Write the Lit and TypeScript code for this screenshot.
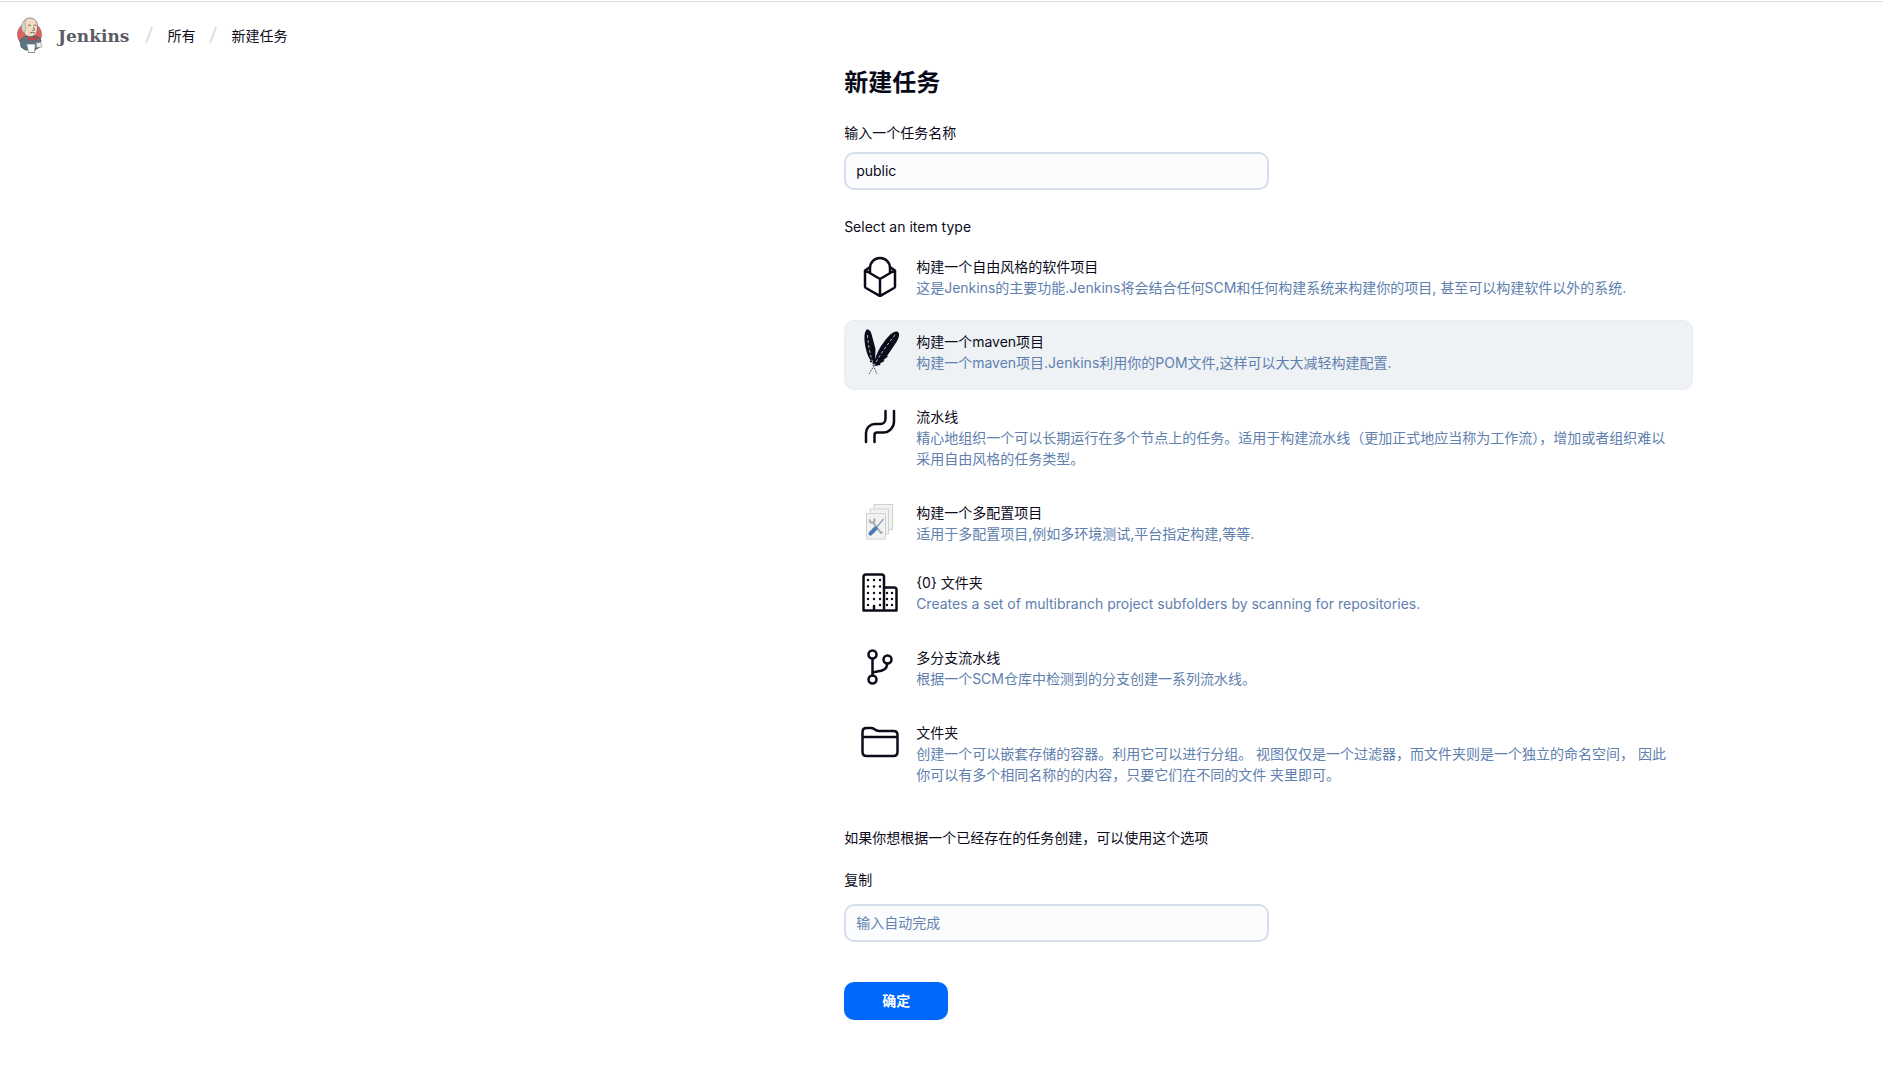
import { LitElement, html, css, svg } from "lit";
import { customElement, state } from "lit/decorators.js";
import { classMap } from "lit/directives/class-map.js";

type Item = { id: string; title: string; text: string; icon: unknown; compact?: boolean };

const dots = (xs: number[], ys: number[]) =>
  ys.map((y) => xs.map((x) => svg`<circle cx=${x} cy=${y} r="1.2"></circle>`));

const cube = svg`<g class="line">
  <path d="M9.5 14.5 5 17.5V33.5q0 1 .9 1.5L18.8 42.3q1.2.7 2.4 0L34.1 35q.9-.5.9-1.5V17.5L30.5 14.5M5.5 17.5 20 26 34.5 17.5M20 26V42"></path>
  <path d="M10 20V15a10 10 0 0 1 20 0V20"></path></g>`;

const feather = svg`
  <g class="solid">
    <path d="M5.5 3.5C6.5 0 10.5 1.5 11.5 6L15.5 21 15 36 13 37 12.5 34.5 9.5 34 10.5 32.5C7 27 5 19 4.5 12 4.3 8 4.5 5.5 5.5 3.5Z"></path>
    <path d="M38 4C40 5.5 39 10 36.5 14L27 28 28 28.5 23.5 32 24.5 33 20 35.5 20.5 37 15 38 14.5 33C16.5 26 19 20 24 14 28.5 7.5 34.5 2 38 4Z"></path>
  </g>
  <g class="rib">
    <path d="M7.5 7C8.5 18 10 28 14 38"></path><path d="M35 7C27 17 19 28 14 38"></path>
  </g>
  <path class="quill" d="M13 37 17 46M14.5 37 9 46"></path>`;

const pipeline = svg`<g class="line" transform="translate(0 2)">
  <path d="M6 37V28a9 9 0 0 1 9-9H20.5a5 5 0 0 0 5-5V6"></path>
  <path d="M14.5 37V30a2.5 2.5 0 0 1 2.5-2.5H23a11 11 0 0 0 11-11V6"></path></g>`;

const matrix = svg`
  <g class="sheet">
    <path d="M14 5.5h18.5v25H14z"></path><path d="M10 10h18.5v25H10z"></path><path d="M6.5 14.5H25.5V40H6.5z"></path>
  </g>
  <path class="steel" d="M13 23.5 21.5 34.5M10 23.5h3l1.5-1.5v-2.5M9.5 20.5l1 3M20 33l2.5 1"></path>
  <path class="rod" d="M23.5 20 15.5 29.5"></path><path class="grip" d="M15.5 29.5 10.5 34.5"></path>`;

const building = svg`<g transform="translate(0 1)"><g class="line">
  <path d="M3.5 40.5V7q0-2.5 2.5-2.5H21.5q2.5 0 2.5 2.5V40.5ZM24 17.5H34q2.5 0 2.5 2.5V40.5H24M14 40V36"></path></g>
  <g class="solid">${dots([8, 14, 20], [10, 16.5, 23, 29])}${dots([8, 20], [35])}${dots([27, 32], [23, 29, 35])}</g></g>`;

const branch = svg`<g class="line" transform="translate(0 2)">
  <circle cx="12.5" cy="8.5" r="4"></circle><circle cx="12.5" cy="33.5" r="4"></circle><circle cx="27.5" cy="13.5" r="4"></circle>
  <path d="M12.5 13V29.5M12.5 27C15 24.5 27.5 27 27 17.5"></path></g>`;

const folder = svg`<g class="line" transform="translate(0 3)">
  <path d="M2.5 16V10q0-4 4-4H11q2 0 3.5 1.2Q16.5 9 19 9H33.5q4 0 4 4V30q0 4-4 4H6.5q-4 0-4-4V15H37.5"></path></g>`;

const ITEMS: Item[] = [
  { id: "freestyle", title: "构建一个自由风格的软件项目", text: "这是Jenkins的主要功能.Jenkins将会结合任何SCM和任何构建系统来构建你的项目, 甚至可以构建软件以外的系统.", icon: cube },
  { id: "maven", title: "构建一个maven项目", text: "构建一个maven项目.Jenkins利用你的POM文件,这样可以大大减轻构建配置.", icon: feather },
  { id: "pipeline", title: "流水线", text: "精心地组织一个可以长期运行在多个节点上的任务。适用于构建流水线（更加正式地应当称为工作流），增加或者组织难以采用自由风格的任务类型。", icon: pipeline },
  { id: "matrix", title: "构建一个多配置项目", text: "适用于多配置项目,例如多环境测试,平台指定构建,等等.", icon: matrix, compact: true },
  { id: "organization", title: "{0} 文件夹", text: "Creates a set of multibranch project subfolders by scanning for repositories.", icon: building },
  { id: "multibranch", title: "多分支流水线", text: "根据一个SCM仓库中检测到的分支创建一系列流水线。", icon: branch },
  { id: "folder", title: "文件夹", text: "创建一个可以嵌套存储的容器。利用它可以进行分组。 视图仅仅是一个过滤器，而文件夹则是一个独立的命名空间， 因此你可以有多个相同名称的的内容，只要它们在不同的文件 夹里即可。", icon: folder },
];

@customElement("app-root")
export class AppRoot extends LitElement {
  @state() private selected = "maven";

  static styles = css`
    :host { display: block; min-height: 100vh; box-sizing: border-box; background: #fff; color: #0b0a1a; border-top: 1px solid #fff;
      font: 400 14px/21px Inter, "Noto Sans CJK SC", sans-serif; }
    * { box-sizing: border-box; }
    .top { border-top: 1px solid #dcdfe0; height: 69px; padding: 0 16px 2px; display: flex; align-items: center; gap: 2px; }
    .brand { display: flex; align-items: center; gap: 15px; color: #5c5b66; text-decoration: none;
      font: 700 17px/24px "DejaVu Serif", serif; }
    .brand span { padding-top: 2px; }
    .logo { width: 27px; height: 36px; }
    .crumbs { display: flex; align-items: center; list-style: none; margin: 0; padding: 0; }
    .crumbs li { display: flex; align-items: center; }
    .slash { width: 8px; height: 18px; margin: 0 14px; stroke: #d5deeb; stroke-width: 2; }
    .crumbs a { color: #0b0a1a; text-decoration: none; }
    .main { margin-left: 44.83%; width: 45.1%; padding-top: 1px; }
    h1 { margin: 0; font-size: 24px; line-height: 24px; font-weight: 700; }
    .label { display: block; }
    .name { margin-top: 27px; }
    .field { display: block; width: 50%; height: 38px; padding: 0 10px 2px; border: 2px solid #d5deea; border-radius: 10px;
      background: #fbfcfe; color: #0b0a1a; font: inherit; outline: none; }
    .name .field { margin-top: 9px; }
    .field::placeholder { color: #6384b0; opacity: 1; }
    fieldset { border: 0; margin: 26px 0 0; padding: 0; min-width: 0; }
    legend { padding: 0; }
    .items { display: flex; flex-direction: column; gap: 5px; padding-top: 8px; }
    .item { display: grid; grid-template-columns: 40px minmax(0, 1fr); column-gap: 16px; min-height: 70px;
      padding: 11px 24px 17px 16px; border-radius: 10px; cursor: pointer; position: relative; }
    .compact { min-height: 65px; padding-bottom: 12px; }
    .item.on { background: #eef2f5; box-shadow: inset 0 0 0 2px #ebeff3; }
    .item input { position: absolute; opacity: 0; margin: 0; width: 1px; height: 1px; }
    .icon { width: 40px; height: 48px; margin: -3px 0; overflow: visible; }
    .copy { display: flex; flex-direction: column; }
    .desc { color: #6080ae; }
    .line { fill: none; stroke: #0c0b1a; stroke-width: 2.5; stroke-linecap: round; stroke-linejoin: round; }
    .solid { fill: #0c0b1a; }
    .rib { fill: none; stroke: #aeb1bd; stroke-width: 1; stroke-dasharray: 3 2; }
    .quill { fill: none; stroke: #55555f; stroke-width: 1; stroke-dasharray: 2 1; }
    .sheet { fill: #f1f2f1; stroke: #cfd1cf; stroke-width: 1; }
    .steel { fill: none; stroke: #a6aba9; stroke-width: 2; }
    .rod { stroke: #8ba5c5; stroke-width: 1.5; }
    .grip { stroke: #4a7ab8; stroke-width: 4; stroke-linecap: round; }
    .hint { margin: 25px 0 0; }
    .from { margin-top: 21px; }
    .from .field { margin-top: 14px; }
    .ok { margin-top: 40px; padding: 0 0 2px; width: 104px; height: 38px; border: 0; border-radius: 10px; background: #0068fa; color: #fff;
      font: inherit; font-weight: 700; cursor: pointer; }
  `;

  private slash() {
    return html`<svg class="slash" viewBox="0 0 8 18" aria-hidden="true"><path d="M7 1 1 17"></path></svg>`;
  }

  private logo() {
    return html`<svg class="logo" viewBox="0 0 27 36" aria-hidden="true">
      <circle cx="13.5" cy="17.5" r="12" fill="#e0605b" stroke="#9a6a6c" stroke-width=".8"></circle>
      <path d="M5 30 4 23 9 19.5 22 19.5 25 23 24 30 19 33H9Z" fill="#5a7482" stroke="#3f535d" stroke-width=".7"></path>
      <path d="M7 13C5 5 9 1 14 1s8 4 7.5 10-2.5 8-7 8.5C10 19.5 8 17 7 13Z" fill="#f0dcc3" stroke="#7b7068" stroke-width=".8"></path>
      <path d="M6.5 14C4.5 9 6 5 9.5 2.5L9 8l1 4-2 4Z" fill="#d6d4cd" stroke="#8b8782" stroke-width=".5"></path>
      <path d="M12 8.5q1.5-1 3 0M17.5 8.5q1.5-1 3 0M17.5 10l1 3-2 .5M14 16q2.5-1.5 5 0" fill="none" stroke="#665c56" stroke-width=".9"></path>
      <path d="M12 19.5l4 2 5-2v4.5l-5-1.5-4 1.5Z" fill="#d23b38"></path>
      <path d="M10.5 27h9l-1 8.5h-6Z" fill="#fff" stroke="#6b777c" stroke-width=".8"></path>
      <path d="M20.5 25l2 1 2-1 1.5 5-5.5.5Z" fill="#eee" stroke="#888" stroke-width=".6"></path>
    </svg>`;
  }

  render() {
    return html`
      <header class="top">
        <a class="brand" href="#">${this.logo()}<span>Jenkins</span></a>
        <nav><ol class="crumbs">
          <li>${this.slash()}<a href="#all">所有</a></li>
          <li>${this.slash()}<a href="#new">新建任务</a></li>
        </ol></nav>
      </header>
      <main class="main">
        <h1>新建任务</h1>
        <div class="name">
          <label class="label" for="name">输入一个任务名称</label>
          <input class="field" id="name" type="text" value="public" />
        </div>
        <fieldset>
          <legend>Select an item type</legend>
          <div class="items">
            ${ITEMS.map((item) => html`
              <label class=${classMap({ item: true, on: item.id === this.selected, compact: !!item.compact })}>
                <input type="radio" name="type" .checked=${item.id === this.selected} @change=${() => (this.selected = item.id)} />
                <svg class="icon" viewBox="0 0 40 48" aria-hidden="true">${item.icon}</svg>
                <span class="copy"><span>${item.title}</span><span class="desc">${item.text}</span></span>
              </label>`)}
          </div>
        </fieldset>
        <p class="hint">如果你想根据一个已经存在的任务创建，可以使用这个选项</p>
        <div class="from">
          <label class="label" for="from">复制</label>
          <input class="field" id="from" type="text" placeholder="输入自动完成" />
        </div>
        <button class="ok" type="button">确定</button>
      </main>`;
  }
}
